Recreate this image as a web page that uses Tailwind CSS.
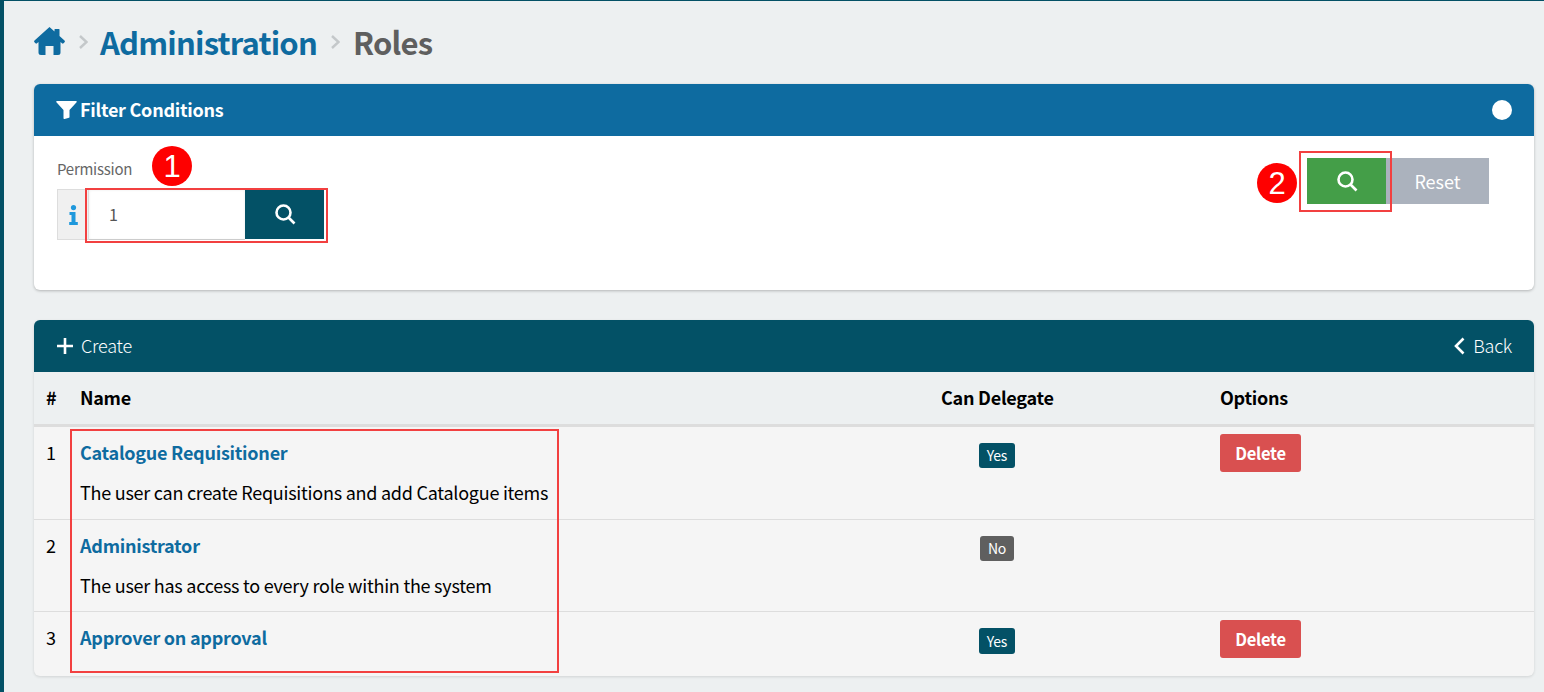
<!DOCTYPE html>
<html>
<head>
    <meta charset="utf-8">
    <title>Roles</title>
    <script src="https://cdn.jsdelivr.net/npm/@tailwindcss/browser@4"></script>
</head>
<body class="bg-[#edf0f1] font-['Noto_Sans_CJK_SC','Noto_Sans',sans-serif] tracking-[-0.25px] text-black overflow-hidden">
<div class="relative h-[692px] w-[1544px] border-l-4 border-t border-[#035166] pl-[30px] pr-[10px]">

    <!-- breadcrumb -->
    <div class="flex h-[83px] items-center pb-[2px] text-[31px] leading-none font-bold tracking-[-0.8px]">
        <svg class="w-[31px] h-[28px] mb-[2px] text-[#0e6ba0]" viewBox="0 0 31 28" fill="currentColor"><path d="M15.5 0 L20.5 4.5 V2.5 Q20.5 2 21 2 H25 Q25.5 2 25.5 2.5 V9 L30.5 13.5 Q31.3 14.4 30.5 15.3 L29.5 16.3 Q28.8 17 28 16.3 L26.5 15 V25.5 Q26.5 28 24 28 H19.5 V19 H11.5 V28 H7 Q4.5 28 4.5 25.5 V15 L3 16.3 Q2.2 17 1.5 16.3 L0.5 15.3 Q-0.3 14.4 0.5 13.5 Z"/></svg>
        <svg class="w-[9px] h-[14px] ml-[14px] mr-[12px] text-[#c4c8ca]" viewBox="0 0 9 14" fill="none" stroke="currentColor" stroke-width="2.4"><path d="M1 1 L7.5 7 L1 13"/></svg>
        <span class="text-[#0e6ba0]">Administration</span>
        <svg class="w-[9px] h-[14px] ml-[14px] mr-[13px] text-[#c4c8ca]" viewBox="0 0 9 14" fill="none" stroke="currentColor" stroke-width="2.4"><path d="M1 1 L7.5 7 L1 13"/></svg>
        <span class="text-[#5f5f5f]">Roles</span>
    </div>

    <!-- filter panel -->
    <section class="h-[206px] rounded-md bg-white shadow-[0_1px_3px_rgba(0,0,0,0.25)]">
        <div class="flex h-[52px] items-center justify-between rounded-t-md bg-[#0e6ba0] pl-[22px] pr-[22px] text-white">
            <div class="flex items-center gap-[3px]">
                <svg class="w-[21px] h-[18px]" viewBox="0 0 21 18" fill="currentColor"><path d="M1 0 H20 Q21.2 0 20.6 1.2 L13.5 9 V16 Q13.5 16.6 13 16.8 L8.6 18 Q7.5 18.2 7.5 17 V9 L0.4 1.2 Q-0.2 0 1 0 Z"/></svg>
                <span class="pb-[2px] text-[18px] leading-none font-bold">Filter Conditions</span>
            </div>
            <span class="h-5 w-5 rounded-full bg-white"></span>
        </div>
        <div class="flex justify-between pl-[23px] pr-[45px]">
            <div>
                <div class="mt-[24px] text-[15px] leading-[18px] text-[#666]">Permission</div>
                <div class="mt-[11px] flex h-[51px]">
                    <div class="flex w-[32px] items-center justify-center border border-[#ddd] bg-[#f0f0f0] text-[#1f98dc]">
                        <svg class="h-[20px] w-[9px]" viewBox="0 0 9 20" fill="currentColor"><circle cx="4.5" cy="2.6" r="2.6"/><path d="M0.5 7 H6.5 V17 H8.8 V20 H0.2 V17 H2.5 V10 H0.5 Z"/></svg>
                    </div>
                    <div class="flex w-[156px] items-center border-b border-[#ccc] bg-white pl-[20px] text-[16px] text-[#555] shadow-[inset_0_1px_3px_rgba(0,0,0,0.08)]">1</div>
                    <button class="flex h-[50px] w-[79px] items-center justify-center bg-[#035166] text-white">
                        <svg class="h-[22px] w-[22px]" viewBox="0 0 22 22" fill="none" stroke="currentColor" stroke-width="2.6"><circle cx="9.5" cy="9.5" r="7"/><path d="M14.5 14.5 L20.5 20.5"/></svg>
                    </button>
                </div>
            </div>
            <div class="mt-[22px] flex h-[46px]">
                <button class="flex w-[79px] items-center justify-center bg-[#449e48] text-white">
                    <svg class="h-[22px] w-[22px]" viewBox="0 0 22 22" fill="none" stroke="currentColor" stroke-width="2.6"><circle cx="9.5" cy="9.5" r="7"/><path d="M14.5 14.5 L20.5 20.5"/></svg>
                </button>
                <button class="w-[103px] bg-[#abb2bd] pb-[1px] text-[18px] leading-none tracking-normal text-white">Reset</button>
            </div>
        </div>
    </section>

    <!-- roles panel -->
    <section class="mt-[30px] h-[356px] rounded-md bg-[#f5f5f5] shadow-[0_1px_3px_rgba(0,0,0,0.12)]">
        <div class="flex h-[52px] items-center justify-between rounded-t-md bg-[#035166] pl-[23px] pr-[22px] text-[18px] leading-none text-white font-light">
            <div class="flex items-center gap-[8px]">
                <svg class="h-[16px] w-[16px]" viewBox="0 0 16 16" stroke="currentColor" stroke-width="2.6"><path d="M8 0 V16 M0 8 H16"/></svg>
                <span class="pb-[2px]">Create</span>
            </div>
            <div class="flex items-center gap-[8px]">
                <svg class="h-[18px] w-[11px]" viewBox="0 0 11 18" fill="none" stroke="currentColor" stroke-width="2.6"><path d="M9.5 1.5 L2 9 L9.5 16.5"/></svg>
                <span class="pb-[2px]">Back</span>
            </div>
        </div>

        <div class="grid h-[55px] grid-cols-[34px_861px_279px_1fr] border-b-[3px] border-[#ddd] bg-[#edf0f1] text-[18px] leading-[50px] font-bold">
            <div class="pl-3">#</div>
            <div class="pl-3">Name</div>
            <div class="pl-3">Can Delegate</div>
            <div class="pl-3">Options</div>
        </div>

        <div class="grid h-[93px] grid-cols-[34px_861px_279px_1fr] border-b border-[#ddd] text-[18px]">
            <div class="pl-3 pt-[13px] leading-[24px]">1</div>
            <div class="pl-3 pt-[13px] leading-[24px]">
                <a class="font-bold text-[#0e6ba0]">Catalogue Requisitioner</a>
                <p class="mt-[16px]">The user can create Requisitions and add Catalogue items</p>
            </div>
            <div class="pl-3 pt-[16px]">
                <div class="flex w-[112px] justify-center">
                    <span class="h-[25px] rounded-[3px] bg-[#035166] px-[8px] text-[14px] leading-[25px] text-white">Yes</span>
                </div>
            </div>
            <div class="pl-3 pt-[7px]">
                <button class="h-[38px] w-[81px] rounded-[3px] bg-[#d95050] text-[16.5px] leading-none font-bold text-white">Delete</button>
            </div>
        </div>

        <div class="grid h-[92px] grid-cols-[34px_861px_279px_1fr] border-b border-[#ddd] text-[18px]">
            <div class="pl-3 pt-[13px] leading-[24px]">2</div>
            <div class="pl-3 pt-[13px] leading-[24px]">
                <a class="font-bold text-[#0e6ba0]">Administrator</a>
                <p class="mt-[16px]">The user has access to every role within the system</p>
            </div>
            <div class="pl-3 pt-[16px]">
                <div class="flex w-[112px] justify-center">
                    <span class="h-[25px] rounded-[3px] bg-[#5f5f5f] px-[8px] text-[14px] leading-[25px] text-white">No</span>
                </div>
            </div>
            <div></div>
        </div>

        <div class="grid h-[64px] grid-cols-[34px_861px_279px_1fr] text-[18px]">
            <div class="pl-3 pt-[13px] leading-[24px]">3</div>
            <div class="pl-3 pt-[13px] leading-[24px]">
                <a class="font-bold text-[#0e6ba0]">Approver on approval</a>
            </div>
            <div class="pl-3 pt-[16px]">
                <div class="flex w-[112px] justify-center">
                    <span class="h-[26px] rounded-[3px] bg-[#035166] px-[8px] text-[14px] leading-[26px] text-white">Yes</span>
                </div>
            </div>
            <div class="pl-3 pt-[8px]">
                <button class="h-[38px] w-[81px] rounded-[3px] bg-[#d95050] text-[16.5px] leading-none font-bold text-white">Delete</button>
            </div>
        </div>
    </section>

    <!-- screenshot annotations -->
    <div class="absolute left-[148px] top-[145px] flex h-10 w-10 items-center justify-center rounded-full bg-[#fe0000] font-['Liberation_Sans',sans-serif] text-[31px] leading-none text-white">1</div>
    <div class="absolute left-[1253px] top-[162px] flex h-10 w-10 items-center justify-center rounded-full bg-[#fe0000] font-['Liberation_Sans',sans-serif] text-[31px] leading-none text-white">2</div>
    <div class="absolute left-[81px] top-[187px] h-[55px] w-[243px] border-2 border-[#f24040]"></div>
    <div class="absolute left-[1295px] top-[150px] h-[61px] w-[93px] border-2 border-[#f24040]"></div>
    <div class="absolute left-[66px] top-[428px] h-[244px] w-[489px] border-2 border-[#f24040]"></div>
</div>
</body>
</html>
